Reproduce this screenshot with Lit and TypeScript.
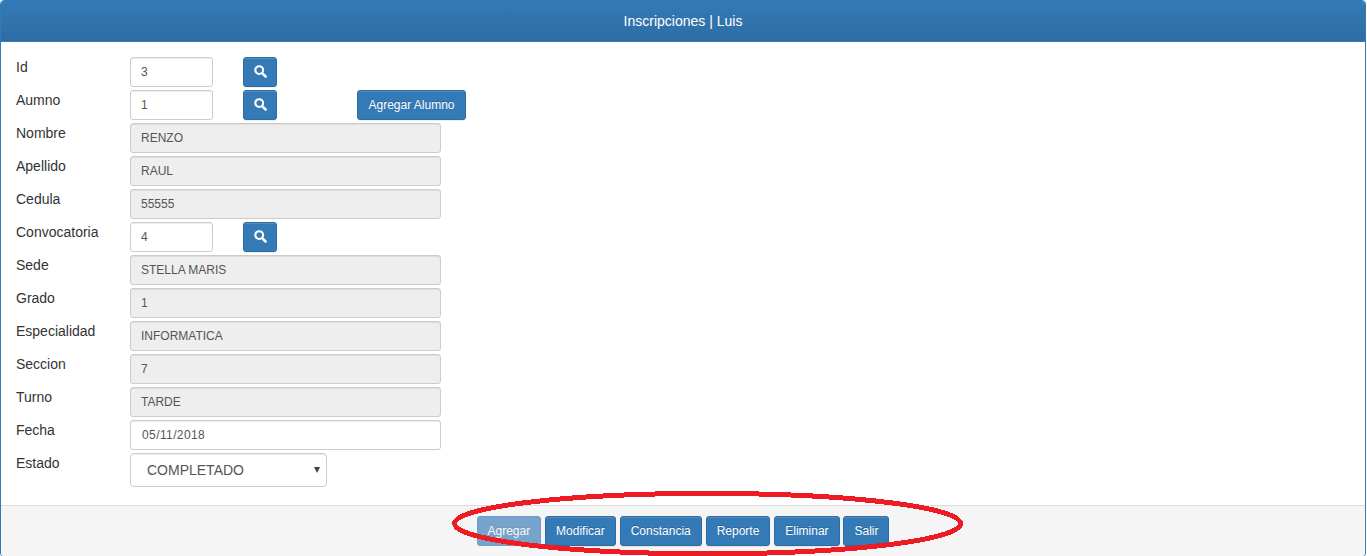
import { LitElement, html, css, svg, nothing } from "lit";
import { customElement, property } from "lit/decorators.js";

interface Field {
  label: string;
  value: string;
  kind: "short" | "locked" | "wide" | "select";
  search?: boolean;
  action?: string;
}

const FIELDS: Field[] = [
  { label: "Id", value: "3", kind: "short", search: true },
  { label: "Aumno", value: "1", kind: "short", search: true, action: "Agregar Alumno" },
  { label: "Nombre", value: "RENZO", kind: "locked" },
  { label: "Apellido", value: "RAUL", kind: "locked" },
  { label: "Cedula", value: "55555", kind: "locked" },
  { label: "Convocatoria", value: "4", kind: "short", search: true },
  { label: "Sede", value: "STELLA MARIS", kind: "locked" },
  { label: "Grado", value: "1", kind: "locked" },
  { label: "Especialidad", value: "INFORMATICA", kind: "locked" },
  { label: "Seccion", value: "7", kind: "locked" },
  { label: "Turno", value: "TARDE", kind: "locked" },
  { label: "Fecha", value: "05/11/2018", kind: "wide" },
  { label: "Estado", value: "COMPLETADO", kind: "select" },
];

@customElement("action-button")
export class ActionButton extends LitElement {
  @property({ type: Boolean }) disabled = false;

  static styles = css`
    :host { display: block; flex: none; }
    button {
      display: flex;
      align-items: center;
      justify-content: center;
      box-sizing: border-box;
      width: 100%;
      height: 30px;
      margin: 0;
      padding: 0 10px;
      border: 1px solid #2e6da4;
      border-radius: 3px;
      background: #337ab7;
      color: #fff;
      font: 12px/18px "Liberation Sans", Arial, sans-serif;
      text-shadow: 0 -1px 0 rgba(0, 0, 0, 0.2);
      box-shadow: inset 0 1px 0 rgba(255, 255, 255, 0.15), 0 1px 1px rgba(0, 0, 0, 0.075);
      white-space: nowrap;
    }
    button:disabled { opacity: 0.65; box-shadow: none; }
  `;

  render() {
    return html`<button ?disabled=${this.disabled}><slot></slot></button>`;
  }
}

@customElement("app-root")
export class AppRoot extends LitElement {
  static styles = css`
    :host {
      display: block;
      position: relative;
      height: 556px;
      overflow: hidden;
      background: #fff;
      color: #333;
      font: 14px/20px "Liberation Sans", Arial, sans-serif;
    }
    .panel {
      display: flex;
      flex-direction: column;
      box-sizing: border-box;
      width: 1366px;
      height: 557px;
      border: 1px solid #337ab7;
      border-radius: 4px;
      overflow: hidden;
    }
    .heading {
      box-sizing: border-box;
      height: 41px;
      padding: 10px 15px;
      border-bottom: 1px solid #337ab7;
      background: linear-gradient(#337ab7, #2e6da4);
      color: #fff;
      text-align: center;
    }
    .form {
      flex: 1;
      display: flex;
      flex-direction: column;
      gap: 3px;
      padding: 15px;
    }
    .row { display: flex; align-items: flex-start; }
    .label { width: 114px; }
    .box {
      box-sizing: border-box;
      height: 30px;
      padding: 5px 10px;
      border: 1px solid #ccc;
      border-radius: 3px;
      background: #fff;
      box-shadow: inset 0 1px 1px rgba(0, 0, 0, 0.075);
      color: #555;
      font-size: 12px;
      line-height: 18px;
    }
    .short { width: 83px; }
    .locked { width: 311px; background: #eee; }
    .wide { width: 311px; padding-left: 11px; letter-spacing: 0.4px; }
    .select {
      display: flex;
      align-items: center;
      justify-content: space-between;
      width: 197px;
      height: 34px;
      padding: 0 6px 0 16px;
      border-radius: 4px;
      font-size: 14px;
    }
    .arrow { width: 6px; height: 6px; fill: #444; }
    .search { width: 34px; margin-left: 30px; }
    .glass { flex: none; width: 13px; height: 13px; margin-bottom: 1px; }
    .extra { margin-left: 80px; width: 109px; }
    .footer {
      display: flex;
      justify-content: center;
      gap: 3.9px;
      height: 40px;
      padding-top: 10px;
      border-top: 1px solid #ddd;
      background: #f5f5f5;
    }
    .mark {
      position: absolute;
      left: 450px;
      top: 488px;
      width: 516px;
      height: 68px;
      overflow: hidden;
    }
  `;

  private glass() {
    return svg`<svg class="glass" viewBox="0 0 13 13">
      <circle cx="5.2" cy="5.1" r="3.9" fill="none" stroke="#fff" stroke-width="2.1"></circle>
      <path d="M8.4 8.3L11.6 11.5" stroke="#fff" stroke-width="2.5" stroke-linecap="round"></path>
    </svg>`;
  }

  private row(f: Field) {
    return html`<div class="row">
      <div class="label">${f.label}</div>
      <div class="box ${f.kind}">${f.value}${f.kind === "select"
        ? html`<svg class="arrow" viewBox="0 0 6 6"><path d="M0 0H6L3 6Z"></path></svg>`
        : nothing}</div>
      ${f.search ? html`<action-button class="search">${this.glass()}</action-button>` : nothing}
      ${f.action ? html`<action-button class="extra">${f.action}</action-button>` : nothing}
    </div>`;
  }

  render() {
    return html`
      <div class="panel">
        <div class="heading">Inscripciones | Luis</div>
        <div class="form">${FIELDS.map((f) => this.row(f))}</div>
        <div class="footer">
          <action-button disabled>Agregar</action-button>
          <action-button>Modificar</action-button>
          <action-button>Constancia</action-button>
          <action-button>Reporte</action-button>
          <action-button>Eliminar</action-button>
          <action-button>Salir</action-button>
        </div>
      </div>
      <svg class="mark" viewBox="0 0 516 68" shape-rendering="crispEdges">
        <ellipse cx="257.5" cy="35.6" rx="253" ry="30.2" fill="none" stroke="#ed1c24" stroke-width="5"></ellipse>
      </svg>
    `;
  }
}
